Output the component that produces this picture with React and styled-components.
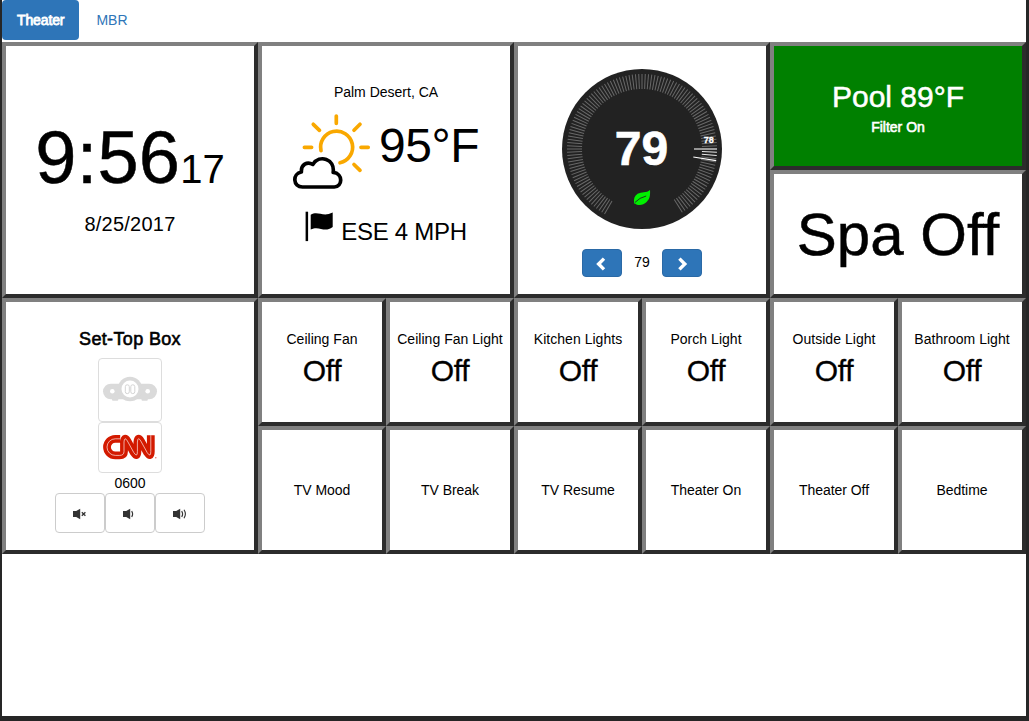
import React from "react";
import styled, { createGlobalStyle } from "styled-components";

const Global = createGlobalStyle`
  * { box-sizing: border-box; }
  html, body { margin: 0; padding: 0; overflow: hidden; }
  body {
    font-family: "Liberation Sans", Arial, sans-serif;
    font-size: 14px;
    line-height: 20px;
    color: #000;
    background: #262626;
  }
  svg { display: block; flex: none; }
`;

const Screen = styled.div`
  width: 1029px;
  height: 721px;
  padding: 0 3px 5px 2px;
  background: #262626;
`;

const Page = styled.div`
  height: 716px;
  background: #fff;
`;

const Nav = styled.nav`
  display: flex;
  gap: 2px;
  height: 42px;
`;

const NavPill = styled.a`
  height: 40px;
  padding: 10px 15px;
  border-radius: 4px;
  letter-spacing: ${(p) => (p.$active ? "-0.12px" : "0")};
  color: ${(p) => (p.$active ? "#fff" : "#2e75b8")};
  background: ${(p) => (p.$active ? "#2e75b8" : "transparent")};
  -webkit-text-stroke: ${(p) => (p.$active ? "0.8px #fff" : "0")};
`;

const Board = styled.main`
  display: grid;
  grid-template-columns: repeat(8, 128px);
  grid-template-rows: repeat(4, 128px);
`;

const Tile = styled.section`
  grid-column: span ${(p) => p.$w || 1};
  grid-row: span ${(p) => p.$h || 1};
  display: flex;
  flex-direction: column;
  align-items: center;
  padding-top: ${(p) => p.$top}px;
  border: 4px solid;
  border-color: #808080 #2c2c2c #2c2c2c #808080;
  background: ${(p) => (p.$on ? "#008000" : "#fff")};
  color: ${(p) => (p.$on ? "#fff" : "#000")};
  white-space: nowrap;
`;

const Time = styled.div`
  font-size: 74px;
  line-height: 80px;
  letter-spacing: 0.2px;
  -webkit-text-stroke: 0.5px #000;
`;

const Seconds = styled.span`
  font-size: 40px;
  line-height: 40px;
  letter-spacing: 0;
  -webkit-text-stroke: 0;
`;

const DateText = styled.div`
  margin-top: 12px;
  font-size: 20px;
  line-height: 28px;
  letter-spacing: 0.25px;
`;

const Label = styled.div`
  letter-spacing: ${(p) => p.$track || 0}px;
`;

const Conditions = styled.div`
  display: flex;
  gap: 8px;
  padding-top: 11px;
  height: 98px;
`;

const Temperature = styled.div`
  padding-top: 8px;
  font-size: 48px;
  line-height: 50px;
  letter-spacing: -0.5px;
`;

const Wind = styled.div`
  display: flex;
  gap: 8px;
  padding-top: 11px;
  font-size: 24px;
  line-height: 42px;
  letter-spacing: -0.3px;
`;

const Stepper = styled.div`
  display: flex;
  margin-top: 20px;
`;

const StepButton = styled.button`
  display: flex;
  align-items: center;
  justify-content: center;
  width: 40px;
  height: 28px;
  padding: 2px 0 0;
  border: 1px solid #2a69a6;
  border-radius: 4px;
  background: #2e75b8;
`;

const Setpoint = styled.div`
  width: 40px;
  line-height: 26px;
  text-align: center;
`;

const Heading = styled.div`
  font-size: 30px;
  line-height: 34px;
  -webkit-text-stroke: 0.5px #fff;
`;

const Status = styled.div`
  margin-top: 3px;
  -webkit-text-stroke: 0.6px #fff;
`;

const BigText = styled.div`
  font-size: 60px;
  line-height: 70px;
  -webkit-text-stroke: 0.5px #000;
`;

const Title = styled.h2`
  margin: 0 0 7px;
  font-size: 18px;
  font-weight: normal;
  line-height: 24px;
  letter-spacing: 0.35px;
  -webkit-text-stroke: 0.6px #000;
`;

const Thumb = styled.div`
  width: 64px;
  height: ${(p) => p.$height}px;
  border: 1px solid #ddd;
  border-radius: 4px;
  svg { margin: -1px; }
`;

const Buttons = styled.div`
  display: flex;
`;

const VolumeButton = styled.button`
  display: flex;
  align-items: center;
  justify-content: center;
  width: 50px;
  height: 40px;
  padding: 2px 0 0;
  border: 1px solid #ccc;
  border-radius: 4px;
  background: #fff;
`;

const LightState = styled.div`
  margin-top: 5px;
  font-size: 30px;
  line-height: 34px;
  letter-spacing: -0.4px;
  -webkit-text-stroke: 0.3px #000;
`;

const SunCloud = () => (
  <svg width="78" height="78" fill="none" strokeWidth="3.7" strokeLinecap="round">
    <g stroke="#f9a800">
      <path d="M28 37.6A16 16 0 1 1 47 49.8" />
      <path d="M43.3 3v7.3M20.3 11.3l6.2 6M67 11.3l-6 6M11.4 34.3h7.2M68 34.3h7.2M61 51.5l6 5.8" />
    </g>
    <path
      d="M9.5 74C-.2 74-.8 60.6 8.4 59C7.8 51.5 14.2 48 19.8 51.4C26.6 41 42 46 40.2 59.4C50.5 60.5 49.5 74 41.3 74Z"
      stroke="#000"
      strokeLinejoin="round"
    />
  </svg>
);

const Flag = () => (
  <svg width="28" height="31">
    <path d="M.6 0.7h2.5v29.4H.6z" />
    <path d="M5.7 3.8C13-.8 17.5 6.6 27.7 1.6V15.9C19 22.6 14.5 14 5.7 18.6z" />
  </svg>
);

const DIAL_TICKS = Array.from({ length: 120 }, (_, i) => -150 + i * 2.5);

const Dial = () => (
  <svg width="160" height="160">
    <circle cx="80" cy="80" r="80" fill="#222" />
    {DIAL_TICKS.map((a) => (
      <line
        key={a}
        x1="80"
        x2="80"
        y1="5"
        y2="20"
        stroke="#fff"
        strokeWidth="1"
        strokeOpacity={a > 90 && a < 97 ? 0.9 : 0.32}
        transform={`rotate(${a} 80 80)`}
      />
    ))}
    <path d="M132 80H155" stroke="#aaa" strokeWidth="1.7" />
    <path d="M131.3 88L154.2 91.6" stroke="#fff" strokeWidth="1.1" />
    <text x="79.5" y="96" fill="#fff" stroke="#fff" strokeWidth="0.6" fontSize="48" fontWeight="bold" textAnchor="middle">79</text>
    <text x="146.7" y="74" fill="#fff" stroke="#fff" strokeWidth="0.3" fontSize="9" fontWeight="bold" textAnchor="middle">78</text>
    <path d="M88 121C88.4 127 87.6 130 84.6 133C81.6 136 77.6 136.6 74.4 135.4Q73.4 134.6 72.2 134.4C71.4 130 72.6 126.6 75.6 124.8C79.6 122.6 84.4 124.4 88 121Z" fill="#00f000" />
    <path d="M73 133.4Q77.4 128.6 84.2 127" fill="none" stroke="#222" strokeWidth="0.9" />
  </svg>
);

const Chevron = ({ right }) => (
  <svg width="12" height="14">
    <path
      d={right ? "M3.4 1.6L8.8 7L3.4 12.4" : "M8 1.6L2.6 7L8 12.4"}
      fill="none"
      stroke="#fff"
      strokeWidth="3.4"
    />
  </svg>
);

const SetTopIcon = () => (
  <svg width="64" height="64" fill="#dadada">
    <rect x="5" y="25.7" width="54" height="15.6" rx="7.8" />
    <rect x="14" y="39" width="6.3" height="3.8" rx="1" />
    <rect x="43.5" y="39" width="6.3" height="3.8" rx="1" />
    <circle cx="32" cy="31" r="12.2" />
    <circle cx="32" cy="31" r="8.5" fill="#fff" />
    <circle cx="14.3" cy="33.2" r="2.3" fill="#fff" />
    <circle cx="49.7" cy="33.2" r="2.3" fill="#fff" />
    <g fill="none" stroke="#d4d4d4">
      <rect x="27.3" y="26.8" width="4" height="8.8" rx="1.9" />
      <rect x="32.8" y="26.8" width="4" height="8.8" rx="1.9" />
    </g>
  </svg>
);

const RIBBON =
  "M22.2 16.8H17.3A8.3 8.3 0 0 0 17.3 33.4H21.5Q26 33.4 26 29.5V20Q26.4 14 29.4 19L35.8 30.6Q39.4 36 39.4 29.5V20Q39.8 14 42.8 19L49.2 30.6Q52.8 36 52.8 29.5V13.2";

const ChannelLogo = () => (
  <svg width="64" height="51" fill="none">
    <path d={RIBBON} stroke="#d31a00" strokeWidth="7.8" />
    <path d={RIBBON} stroke="#fff" strokeWidth="0.8" strokeOpacity="0.8" />
    <circle cx="57.8" cy="35.8" r=".7" fill="#e06a5a" />
  </svg>
);

const Speaker = ({ level }) => (
  <svg width="16" height="12" fill="none" stroke="#333" strokeWidth="1.1">
    <path d="M1 3H4.2L8.2 .8V11.2L4.2 9H1Z" fill="#333" stroke="none" />
    {level === 0 && <path d="M9.8 4.2L13.4 7.8M13.4 4.2L9.8 7.8" strokeWidth="1.3" />}
    {level > 0 && <path d="M9.7 3Q11.6 6 9.7 9" />}
    {level > 1 && <path d="M12 1.8Q14.8 6 12 10.2" />}
  </svg>
);

const LIGHTS = ["Ceiling Fan", "Ceiling Fan Light", "Kitchen Lights", "Porch Light", "Outside Light", "Bathroom Light"];
const SCENES = ["TV Mood", "TV Break", "TV Resume", "Theater On", "Theater Off", "Bedtime"];

export default function App() {
  return (
    <Screen>
      <Global />
      <Page>
        <Nav>
          <NavPill $active>Theater</NavPill>
          <NavPill>MBR</NavPill>
        </Nav>
        <Board>
          <Tile $w={2} $h={2} $top={72}>
            <Time>9:56<Seconds>17</Seconds></Time>
            <DateText>8/25/2017</DateText>
          </Tile>
          <Tile $w={2} $h={2} $top={36}>
            <Label>Palm Desert, CA</Label>
            <Conditions>
              <SunCloud />
              <Temperature>95°F</Temperature>
            </Conditions>
            <Wind>
              <Flag />
              <span>ESE 4 MPH</span>
            </Wind>
          </Tile>
          <Tile $w={2} $h={2} $top={23}>
            <Dial />
            <Stepper>
              <StepButton aria-label="Lower"><Chevron /></StepButton>
              <Setpoint>79</Setpoint>
              <StepButton aria-label="Raise"><Chevron right /></StepButton>
            </Stepper>
          </Tile>
          <Tile $w={2} $top={34} $on>
            <Heading>Pool 89°F</Heading>
            <Status>Filter On</Status>
          </Tile>
          <Tile $w={2} $top={26}>
            <BigText>Spa Off</BigText>
          </Tile>
          <Tile $w={2} $h={2} $top={25}>
            <Title>Set-Top Box</Title>
            <Thumb $height={64}><SetTopIcon /></Thumb>
            <Thumb $height={51}><ChannelLogo /></Thumb>
            <Label>0600</Label>
            <Buttons>
              {[0, 1, 2].map((level) => (
                <VolumeButton key={level} aria-label="Volume"><Speaker level={level} /></VolumeButton>
              ))}
            </Buttons>
          </Tile>
          {LIGHTS.map((name) => (
            <Tile key={name} $top={27}>
              <Label $track={0.03}>{name}</Label>
              <LightState>Off</LightState>
            </Tile>
          ))}
          {SCENES.map((name) => (
            <Tile key={name} $top={50}>
              <Label $track={-0.05}>{name}</Label>
            </Tile>
          ))}
        </Board>
      </Page>
    </Screen>
  );
}
